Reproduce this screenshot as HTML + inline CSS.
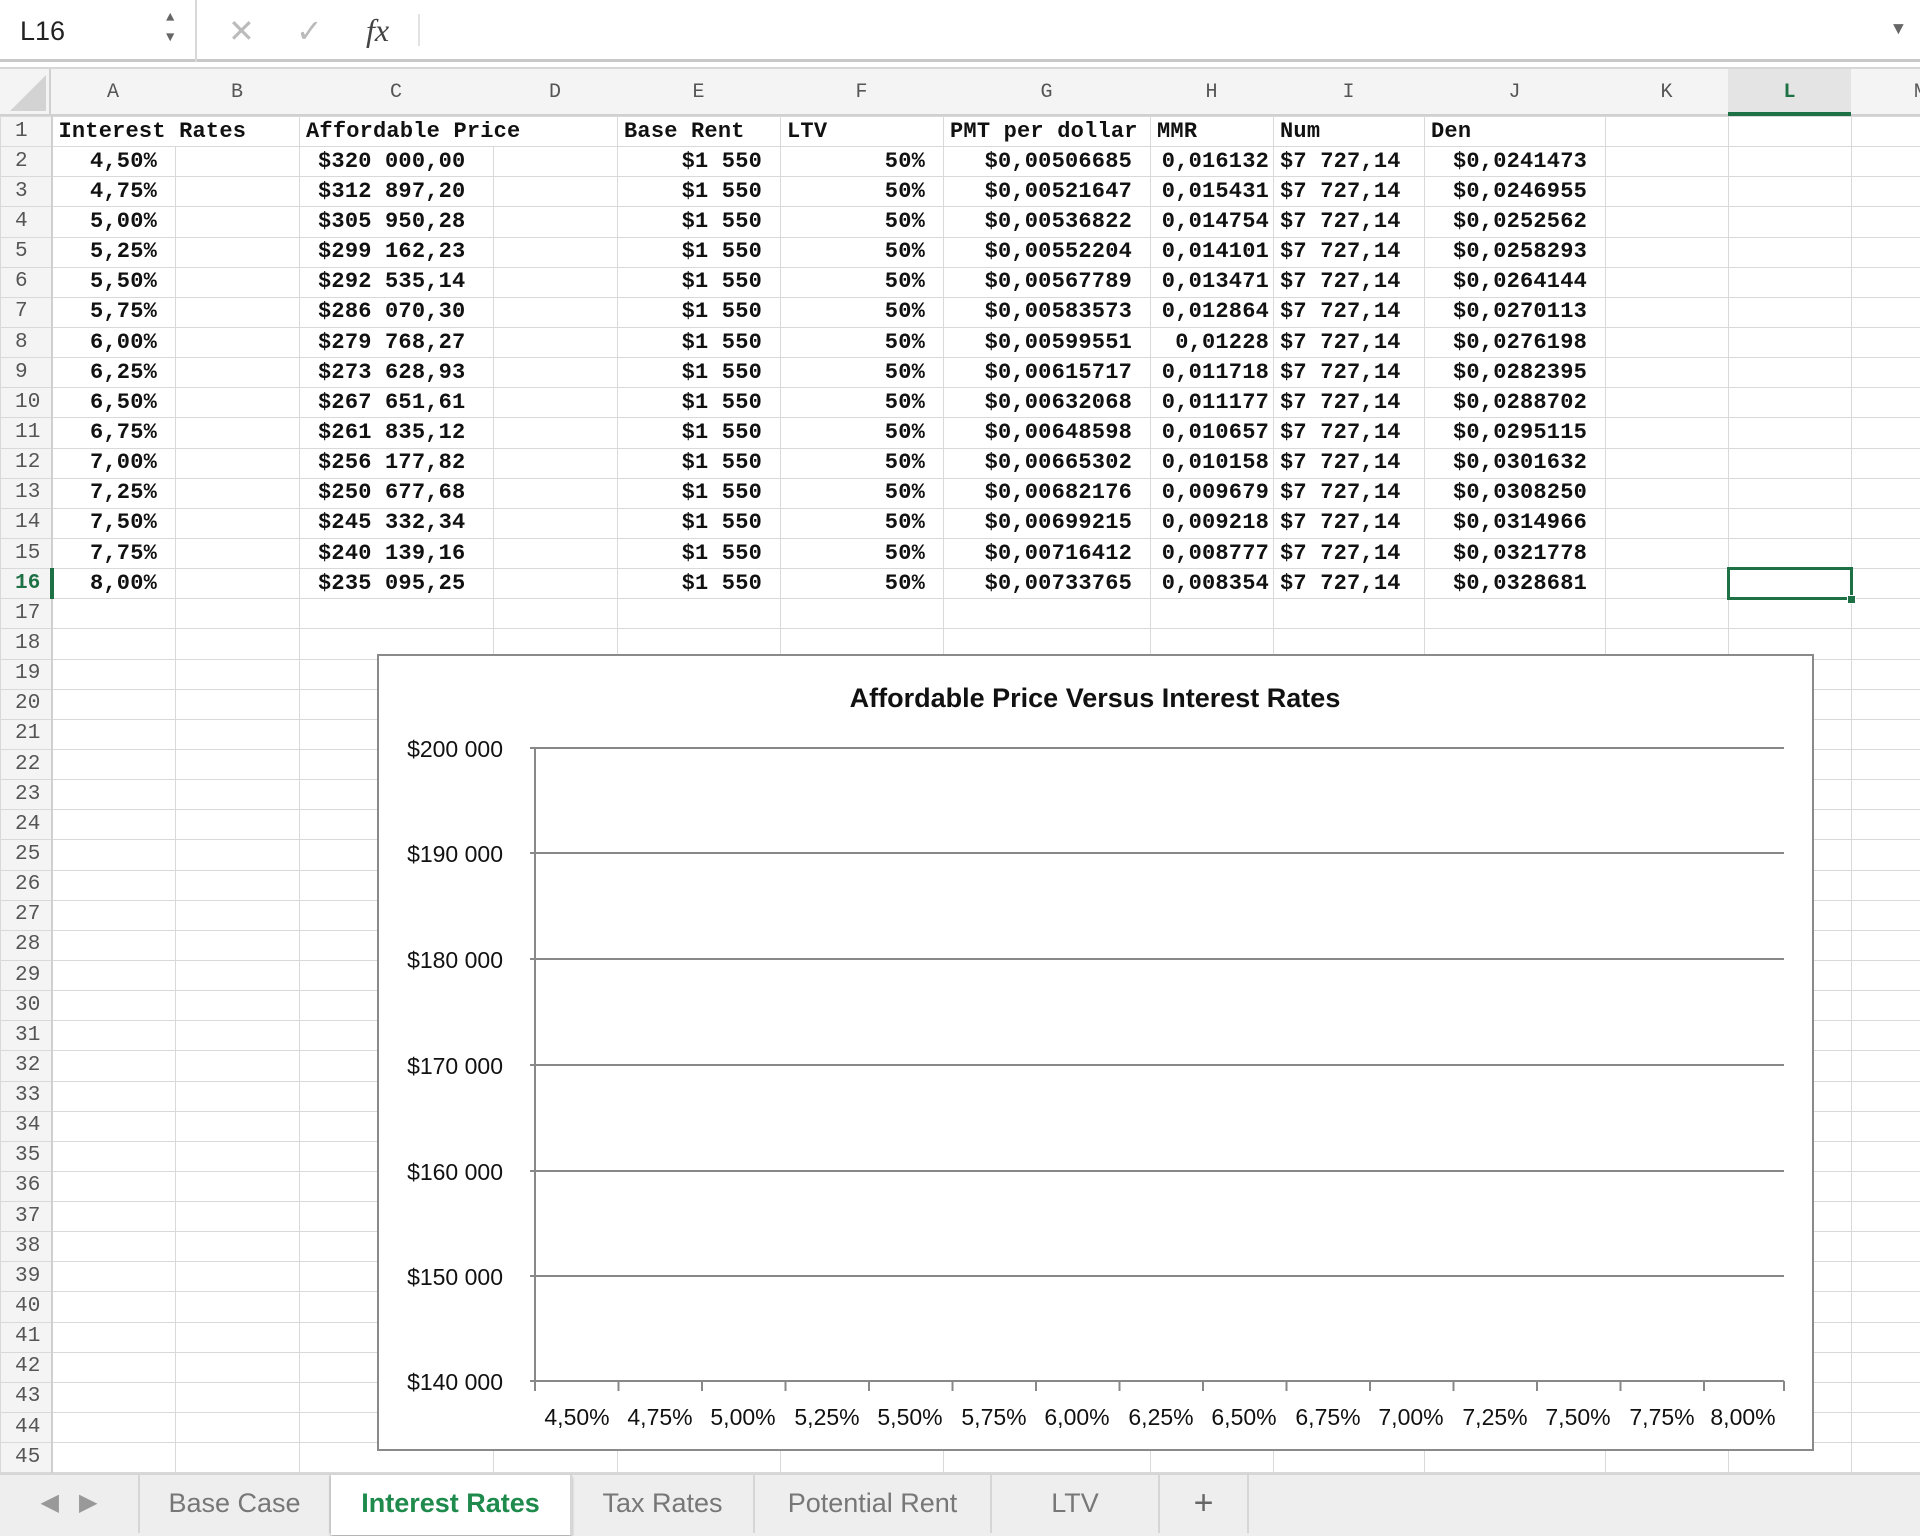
<!DOCTYPE html>
<html><head><meta charset="utf-8"><style>
*{margin:0;padding:0;box-sizing:border-box}
body{width:1920px;height:1536px;overflow:hidden;background:#fff;position:relative;font-family:"Liberation Mono",monospace}
#fbar{position:absolute;left:0;top:0;width:1920px;height:62px;background:#fff;border-bottom:3px solid #c8c8c8}
#fbar .nb{position:absolute;left:0;top:0;width:197px;height:62px;border-right:2px solid #d8d8d8;font:27px "Liberation Sans",sans-serif;padding:16px 0 0 20px;color:#222}
#fbar .sp{position:absolute;left:166px;top:8px;color:#666;font-size:14px;line-height:20px}
#fbar .ic{position:absolute;top:12px;font:32px "Liberation Sans",sans-serif;color:#bbb}
#hdr{position:absolute;left:0;top:67px;width:1920px;height:49px;background:#f4f4f4;border-bottom:2px solid #d0d0d0;border-top:2px solid #d6d6d6}
table{position:absolute;left:0;top:116px;border-collapse:collapse;table-layout:fixed;width:1931px}
td{height:30.15px;border:1.5px solid #d9d9d9;font-size:22px;white-space:nowrap;overflow:hidden;padding:0 6px;color:#111;line-height:26px;font-weight:bold;letter-spacing:0.2px}
td.n{background:#f4f4f4;color:#555;font-size:21px;padding-left:14px;border-right:2px solid #cfcfcf;font-weight:normal}
.r{text-align:right;padding-right:18px}
.h{position:absolute;top:12px;font-size:20px;color:#555;text-align:center}
#tabs{position:absolute;left:0;top:1473px;width:1920px;height:63px;background:#eeeeee;border-top:2px solid #d6d6d6;font:27px "Liberation Sans Narrow","Liberation Sans",sans-serif;color:#777}
#tabs div{position:absolute;top:0;height:58px;border-right:2px solid #d6d6d6;text-align:center;line-height:56px}
</style></head><body>
<div id="fbar"><div class="nb">L16</div><div class="sp">▲<br>▼</div>
<div class="ic" style="left:228px">✕</div><div class="ic" style="left:296px">✓</div>
<div class="ic" style="left:366px;color:#444;font-family:'Liberation Serif',serif;font-style:italic">fx</div>
<div style="position:absolute;left:418px;top:14px;width:2px;height:32px;background:#e2e2e2"></div>
<div style="position:absolute;left:1893px;top:20px;color:#666;font-size:18px">▼</div></div>
<div id="hdr">
<div style="position:absolute;left:0;top:0;width:51px;height:47px;border-right:2px solid #d0d0d0"><div style="position:absolute;left:10px;top:6px;width:0;height:0;border-left:36px solid transparent;border-bottom:36px solid #d3d3d3"></div></div>
<div class="h" style="left:51px;width:124px">A</div><div class="h" style="left:175px;width:124px">B</div><div class="h" style="left:299px;width:194px">C</div><div class="h" style="left:493px;width:124px">D</div><div class="h" style="left:617px;width:163px">E</div><div class="h" style="left:780px;width:163px">F</div><div class="h" style="left:943px;width:207px">G</div><div class="h" style="left:1150px;width:123px">H</div><div class="h" style="left:1273px;width:151px">I</div><div class="h" style="left:1424px;width:181px">J</div><div class="h" style="left:1605px;width:123px">K</div>
<div style="position:absolute;left:1728px;top:0;width:123px;height:47px;background:#e4e4e4;border-bottom:4px solid #1e7145"></div><div class="h" style="left:1728px;width:123px;color:#1e7145;font-weight:bold">L</div><div class="h" style="left:1900px;width:40px">M</div>
</div>
<table>
<colgroup><col style="width:51px"><col style="width:124px"><col style="width:124px"><col style="width:194px"><col style="width:124px"><col style="width:163px"><col style="width:163px"><col style="width:207px"><col style="width:123px"><col style="width:151px"><col style="width:181px"><col style="width:123px"><col style="width:123px"><col style="width:80px"></colgroup>
<tr><td class="n">1</td><td colspan="2">Interest Rates</td><td colspan="2">Affordable Price</td><td>Base Rent</td><td>LTV</td><td>PMT per dollar</td><td>MMR</td><td>Num</td><td>Den</td><td></td><td></td><td></td></tr>
<tr><td class="n">2</td><td class="r">4,50%</td><td></td><td style="padding-left:18px">$320 000,00</td><td></td><td class="r">$1 550</td><td class="r">50%</td><td class="r">$0,00506685</td><td class="r" style="padding-right:4px">0,016132</td><td>$7 727,14</td><td class="r">$0,0241473</td><td></td><td></td><td></td></tr>
<tr><td class="n">3</td><td class="r">4,75%</td><td></td><td style="padding-left:18px">$312 897,20</td><td></td><td class="r">$1 550</td><td class="r">50%</td><td class="r">$0,00521647</td><td class="r" style="padding-right:4px">0,015431</td><td>$7 727,14</td><td class="r">$0,0246955</td><td></td><td></td><td></td></tr>
<tr><td class="n">4</td><td class="r">5,00%</td><td></td><td style="padding-left:18px">$305 950,28</td><td></td><td class="r">$1 550</td><td class="r">50%</td><td class="r">$0,00536822</td><td class="r" style="padding-right:4px">0,014754</td><td>$7 727,14</td><td class="r">$0,0252562</td><td></td><td></td><td></td></tr>
<tr><td class="n">5</td><td class="r">5,25%</td><td></td><td style="padding-left:18px">$299 162,23</td><td></td><td class="r">$1 550</td><td class="r">50%</td><td class="r">$0,00552204</td><td class="r" style="padding-right:4px">0,014101</td><td>$7 727,14</td><td class="r">$0,0258293</td><td></td><td></td><td></td></tr>
<tr><td class="n">6</td><td class="r">5,50%</td><td></td><td style="padding-left:18px">$292 535,14</td><td></td><td class="r">$1 550</td><td class="r">50%</td><td class="r">$0,00567789</td><td class="r" style="padding-right:4px">0,013471</td><td>$7 727,14</td><td class="r">$0,0264144</td><td></td><td></td><td></td></tr>
<tr><td class="n">7</td><td class="r">5,75%</td><td></td><td style="padding-left:18px">$286 070,30</td><td></td><td class="r">$1 550</td><td class="r">50%</td><td class="r">$0,00583573</td><td class="r" style="padding-right:4px">0,012864</td><td>$7 727,14</td><td class="r">$0,0270113</td><td></td><td></td><td></td></tr>
<tr><td class="n">8</td><td class="r">6,00%</td><td></td><td style="padding-left:18px">$279 768,27</td><td></td><td class="r">$1 550</td><td class="r">50%</td><td class="r">$0,00599551</td><td class="r" style="padding-right:4px">0,01228</td><td>$7 727,14</td><td class="r">$0,0276198</td><td></td><td></td><td></td></tr>
<tr><td class="n">9</td><td class="r">6,25%</td><td></td><td style="padding-left:18px">$273 628,93</td><td></td><td class="r">$1 550</td><td class="r">50%</td><td class="r">$0,00615717</td><td class="r" style="padding-right:4px">0,011718</td><td>$7 727,14</td><td class="r">$0,0282395</td><td></td><td></td><td></td></tr>
<tr><td class="n">10</td><td class="r">6,50%</td><td></td><td style="padding-left:18px">$267 651,61</td><td></td><td class="r">$1 550</td><td class="r">50%</td><td class="r">$0,00632068</td><td class="r" style="padding-right:4px">0,011177</td><td>$7 727,14</td><td class="r">$0,0288702</td><td></td><td></td><td></td></tr>
<tr><td class="n">11</td><td class="r">6,75%</td><td></td><td style="padding-left:18px">$261 835,12</td><td></td><td class="r">$1 550</td><td class="r">50%</td><td class="r">$0,00648598</td><td class="r" style="padding-right:4px">0,010657</td><td>$7 727,14</td><td class="r">$0,0295115</td><td></td><td></td><td></td></tr>
<tr><td class="n">12</td><td class="r">7,00%</td><td></td><td style="padding-left:18px">$256 177,82</td><td></td><td class="r">$1 550</td><td class="r">50%</td><td class="r">$0,00665302</td><td class="r" style="padding-right:4px">0,010158</td><td>$7 727,14</td><td class="r">$0,0301632</td><td></td><td></td><td></td></tr>
<tr><td class="n">13</td><td class="r">7,25%</td><td></td><td style="padding-left:18px">$250 677,68</td><td></td><td class="r">$1 550</td><td class="r">50%</td><td class="r">$0,00682176</td><td class="r" style="padding-right:4px">0,009679</td><td>$7 727,14</td><td class="r">$0,0308250</td><td></td><td></td><td></td></tr>
<tr><td class="n">14</td><td class="r">7,50%</td><td></td><td style="padding-left:18px">$245 332,34</td><td></td><td class="r">$1 550</td><td class="r">50%</td><td class="r">$0,00699215</td><td class="r" style="padding-right:4px">0,009218</td><td>$7 727,14</td><td class="r">$0,0314966</td><td></td><td></td><td></td></tr>
<tr><td class="n">15</td><td class="r">7,75%</td><td></td><td style="padding-left:18px">$240 139,16</td><td></td><td class="r">$1 550</td><td class="r">50%</td><td class="r">$0,00716412</td><td class="r" style="padding-right:4px">0,008777</td><td>$7 727,14</td><td class="r">$0,0321778</td><td></td><td></td><td></td></tr>
<tr><td class="n" style="color:#1e7145;font-weight:bold;border-right:4px solid #1e7145">16</td><td class="r">8,00%</td><td></td><td style="padding-left:18px">$235 095,25</td><td></td><td class="r">$1 550</td><td class="r">50%</td><td class="r">$0,00733765</td><td class="r" style="padding-right:4px">0,008354</td><td>$7 727,14</td><td class="r">$0,0328681</td><td></td><td style="border:3px solid #1e7145"></td><td></td></tr>
<tr><td class="n">17</td><td></td><td></td><td></td><td></td><td></td><td></td><td></td><td></td><td></td><td></td><td></td><td></td><td></td></tr>
<tr><td class="n">18</td><td></td><td></td><td></td><td></td><td></td><td></td><td></td><td></td><td></td><td></td><td></td><td></td><td></td></tr>
<tr><td class="n">19</td><td></td><td></td><td></td><td></td><td></td><td></td><td></td><td></td><td></td><td></td><td></td><td></td><td></td></tr>
<tr><td class="n">20</td><td></td><td></td><td></td><td></td><td></td><td></td><td></td><td></td><td></td><td></td><td></td><td></td><td></td></tr>
<tr><td class="n">21</td><td></td><td></td><td></td><td></td><td></td><td></td><td></td><td></td><td></td><td></td><td></td><td></td><td></td></tr>
<tr><td class="n">22</td><td></td><td></td><td></td><td></td><td></td><td></td><td></td><td></td><td></td><td></td><td></td><td></td><td></td></tr>
<tr><td class="n">23</td><td></td><td></td><td></td><td></td><td></td><td></td><td></td><td></td><td></td><td></td><td></td><td></td><td></td></tr>
<tr><td class="n">24</td><td></td><td></td><td></td><td></td><td></td><td></td><td></td><td></td><td></td><td></td><td></td><td></td><td></td></tr>
<tr><td class="n">25</td><td></td><td></td><td></td><td></td><td></td><td></td><td></td><td></td><td></td><td></td><td></td><td></td><td></td></tr>
<tr><td class="n">26</td><td></td><td></td><td></td><td></td><td></td><td></td><td></td><td></td><td></td><td></td><td></td><td></td><td></td></tr>
<tr><td class="n">27</td><td></td><td></td><td></td><td></td><td></td><td></td><td></td><td></td><td></td><td></td><td></td><td></td><td></td></tr>
<tr><td class="n">28</td><td></td><td></td><td></td><td></td><td></td><td></td><td></td><td></td><td></td><td></td><td></td><td></td><td></td></tr>
<tr><td class="n">29</td><td></td><td></td><td></td><td></td><td></td><td></td><td></td><td></td><td></td><td></td><td></td><td></td><td></td></tr>
<tr><td class="n">30</td><td></td><td></td><td></td><td></td><td></td><td></td><td></td><td></td><td></td><td></td><td></td><td></td><td></td></tr>
<tr><td class="n">31</td><td></td><td></td><td></td><td></td><td></td><td></td><td></td><td></td><td></td><td></td><td></td><td></td><td></td></tr>
<tr><td class="n">32</td><td></td><td></td><td></td><td></td><td></td><td></td><td></td><td></td><td></td><td></td><td></td><td></td><td></td></tr>
<tr><td class="n">33</td><td></td><td></td><td></td><td></td><td></td><td></td><td></td><td></td><td></td><td></td><td></td><td></td><td></td></tr>
<tr><td class="n">34</td><td></td><td></td><td></td><td></td><td></td><td></td><td></td><td></td><td></td><td></td><td></td><td></td><td></td></tr>
<tr><td class="n">35</td><td></td><td></td><td></td><td></td><td></td><td></td><td></td><td></td><td></td><td></td><td></td><td></td><td></td></tr>
<tr><td class="n">36</td><td></td><td></td><td></td><td></td><td></td><td></td><td></td><td></td><td></td><td></td><td></td><td></td><td></td></tr>
<tr><td class="n">37</td><td></td><td></td><td></td><td></td><td></td><td></td><td></td><td></td><td></td><td></td><td></td><td></td><td></td></tr>
<tr><td class="n">38</td><td></td><td></td><td></td><td></td><td></td><td></td><td></td><td></td><td></td><td></td><td></td><td></td><td></td></tr>
<tr><td class="n">39</td><td></td><td></td><td></td><td></td><td></td><td></td><td></td><td></td><td></td><td></td><td></td><td></td><td></td></tr>
<tr><td class="n">40</td><td></td><td></td><td></td><td></td><td></td><td></td><td></td><td></td><td></td><td></td><td></td><td></td><td></td></tr>
<tr><td class="n">41</td><td></td><td></td><td></td><td></td><td></td><td></td><td></td><td></td><td></td><td></td><td></td><td></td><td></td></tr>
<tr><td class="n">42</td><td></td><td></td><td></td><td></td><td></td><td></td><td></td><td></td><td></td><td></td><td></td><td></td><td></td></tr>
<tr><td class="n">43</td><td></td><td></td><td></td><td></td><td></td><td></td><td></td><td></td><td></td><td></td><td></td><td></td><td></td></tr>
<tr><td class="n">44</td><td></td><td></td><td></td><td></td><td></td><td></td><td></td><td></td><td></td><td></td><td></td><td></td><td></td></tr>
<tr><td class="n">45</td><td></td><td></td><td></td><td></td><td></td><td></td><td></td><td></td><td></td><td></td><td></td><td></td><td></td></tr>
</table>
<div style="position:absolute;left:1847px;top:595px;width:9px;height:9px;background:#1e7145;border:1px solid #fff"></div>
<svg style="position:absolute;left:377px;top:654px" width="1437" height="797" viewBox="0 0 1437 797" font-family="Liberation Sans Narrow, Liberation Sans, sans-serif">
<rect x="1" y="1" width="1435" height="795" fill="#fff" stroke="#8a8a8a" stroke-width="2"/>
<text x="718" y="53" text-anchor="middle" font-size="27" font-weight="bold" fill="#111">Affordable Price Versus Interest Rates</text>
<g stroke="#888" stroke-width="2">
<line x1="153" y1="94" x2="1407" y2="94"/><line x1="153" y1="199" x2="1407" y2="199"/><line x1="153" y1="305" x2="1407" y2="305"/><line x1="153" y1="411" x2="1407" y2="411"/><line x1="153" y1="517" x2="1407" y2="517"/><line x1="153" y1="622" x2="1407" y2="622"/><line x1="153" y1="727" x2="1407" y2="727"/>
<line x1="158" y1="94" x2="158" y2="727"/>
</g>
<g font-size="23" fill="#111" text-anchor="end">
<text x="126" y="103">$200 000</text><text x="126" y="208">$190 000</text><text x="126" y="314">$180 000</text><text x="126" y="420">$170 000</text><text x="126" y="526">$160 000</text><text x="126" y="631">$150 000</text><text x="126" y="736">$140 000</text>
</g>
<g stroke="#888" stroke-width="2">
<line x1="158" y1="727" x2="158" y2="737"/><line x1="241.5" y1="727" x2="241.5" y2="737"/><line x1="325" y1="727" x2="325" y2="737"/><line x1="408.5" y1="727" x2="408.5" y2="737"/><line x1="492" y1="727" x2="492" y2="737"/><line x1="575.5" y1="727" x2="575.5" y2="737"/><line x1="659" y1="727" x2="659" y2="737"/><line x1="742.5" y1="727" x2="742.5" y2="737"/><line x1="826" y1="727" x2="826" y2="737"/><line x1="909.5" y1="727" x2="909.5" y2="737"/><line x1="993" y1="727" x2="993" y2="737"/><line x1="1076.5" y1="727" x2="1076.5" y2="737"/><line x1="1160" y1="727" x2="1160" y2="737"/><line x1="1243.5" y1="727" x2="1243.5" y2="737"/><line x1="1327" y1="727" x2="1327" y2="737"/><line x1="1407" y1="727" x2="1407" y2="737"/>
</g>
<g font-size="23" fill="#111" text-anchor="middle">
<text x="200" y="771">4,50%</text><text x="283" y="771">4,75%</text><text x="366" y="771">5,00%</text><text x="450" y="771">5,25%</text><text x="533" y="771">5,50%</text><text x="617" y="771">5,75%</text><text x="700" y="771">6,00%</text><text x="784" y="771">6,25%</text><text x="867" y="771">6,50%</text><text x="951" y="771">6,75%</text><text x="1034" y="771">7,00%</text><text x="1118" y="771">7,25%</text><text x="1201" y="771">7,50%</text><text x="1285" y="771">7,75%</text><text x="1366" y="771">8,00%</text>
</g>
</svg>
<div id="tabs">
<div style="left:0;width:138px;border:none;color:#999;font-size:24px">◀&nbsp;&nbsp;&nbsp;▶</div>
<div style="left:138px;width:193px;border-left:2px solid #d6d6d6">Base Case</div>
<div style="left:331px;width:241px;background:#fff;color:#1e8a4c;font-weight:bold;height:60px;box-shadow:0 2px 3px #aaa">Interest Rates</div>
<div style="left:572px;width:183px">Tax Rates</div>
<div style="left:755px;width:237px">Potential Rent</div>
<div style="left:992px;width:168px">LTV</div>
<div style="left:1160px;width:89px;font-size:34px;color:#666">+</div>
</div>
</body></html>
